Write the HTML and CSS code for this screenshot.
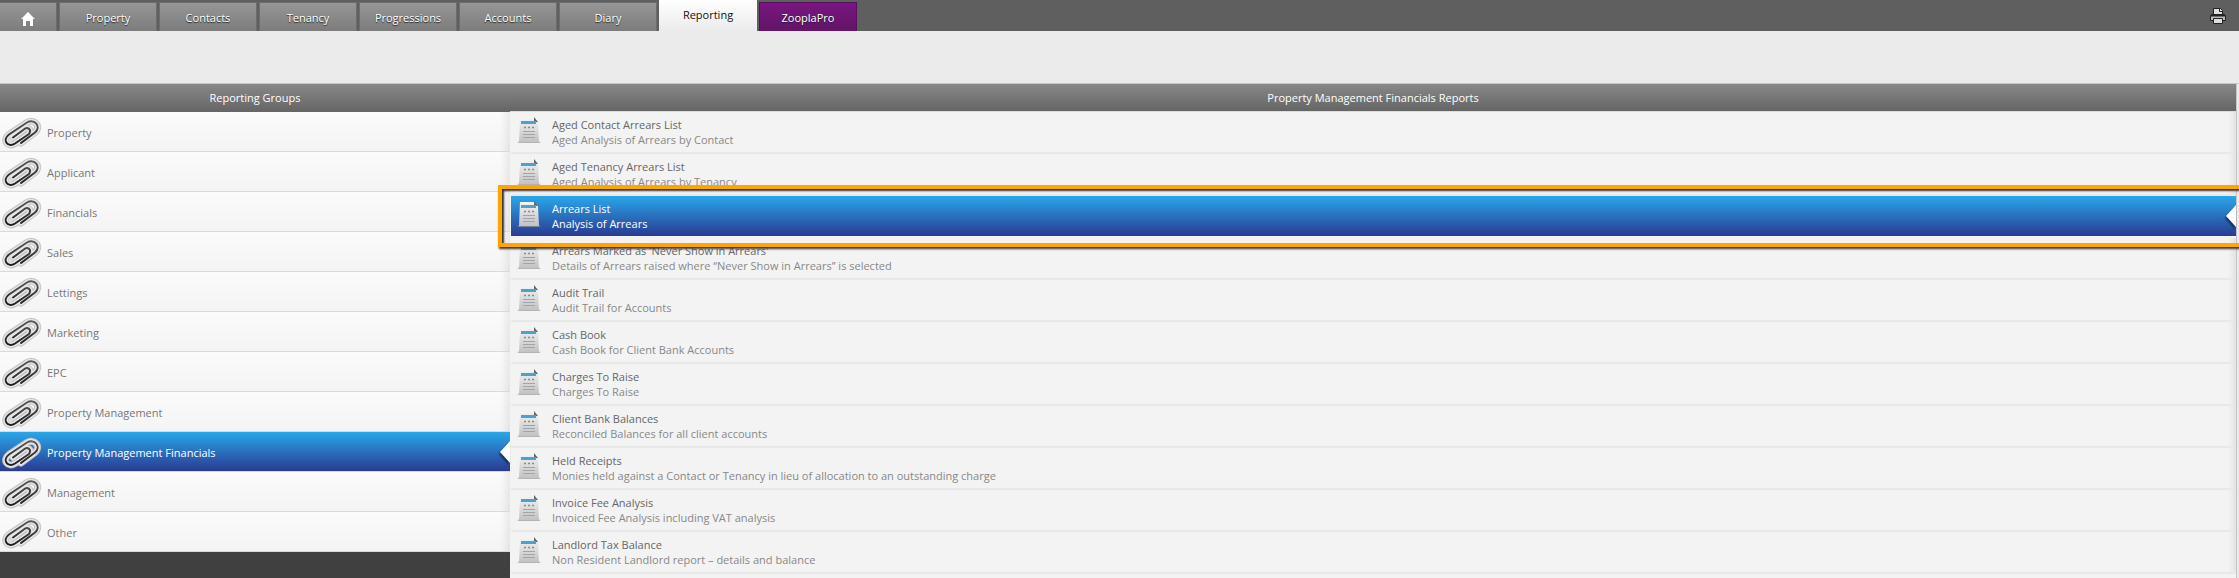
FILE: index.html
```html
<!DOCTYPE html>
<html lang="en">
<head>
<meta charset="utf-8">
<title>Reporting</title>
<link rel="stylesheet" href="styles.css">
</head>
<body>
<svg class="sprite" aria-hidden="true">
  <defs>
    <linearGradient id="paper" x1="0" y1="0" x2="0" y2="1">
      <stop offset="0" stop-color="#f4f4f4"/>
      <stop offset="1" stop-color="#c2c2c2"/>
    </linearGradient>
    <linearGradient id="wire" x1="0" y1="0" x2="0" y2="1">
      <stop offset="0" stop-color="#5a5a5a"/>
      <stop offset="1" stop-color="#1c1c1c"/>
    </linearGradient>
  </defs>
  <symbol id="clip" viewBox="0 0 40 32">
    <g fill="none" stroke-linecap="round" stroke-linejoin="round">
      <path class="halo-edge" d="M19 26 L33 15.500 C40 9 32 1.500 25 5.500 L7 17.500 C-.5 23.500 6 31 13 26.500 L27 17 C30 13 26 9.500 22.500 12 L11 20.500"/>
      <path class="halo" d="M19 26 L33 15.500 C40 9 32 1.500 25 5.500 L7 17.500 C-.5 23.500 6 31 13 26.500 L27 17 C30 13 26 9.500 22.500 12 L11 20.500"/>
      <path class="wire" d="M19 26 L33 15.500 C40 9 32 1.500 25 5.500 L7 17.500 C-.5 23.500 6 31 13 26.500 L27 17 C30 13 26 9.500 22.500 12 L11 20.500"/>
    </g>
  </symbol>
  <symbol id="report" viewBox="0 0 24 26">
    <path d="M0 25 Q12 22 24 25 L22 26 H2Z" fill="#999" opacity=".7"/>
    <path d="M3 1 H17 L21 5 L22 25 H2Z" fill="url(#paper)"/>
    <path d="M17 0 L21 5 H17Z" fill="#666"/>
    <rect x="4" y="4" width="15" height="3" fill="#4da2cc"/>
    <path d="M7 10.500h2M11 10.500h2M15 10.500h2" stroke="#888" stroke-width="1.500"/>
    <path d="M6 14.500h12M6 17.500h12M6 20.500h12" stroke="#9aa5ad"/>
  </symbol>
</svg>

<header class="topbar">
  <nav class="tabs" aria-label="Main">
    <a class="tab home" href="#" aria-label="Home">
      <svg width="14" height="14" viewBox="0 0 14 14"><path d="M7 0 L14 7 H12 V14 H9 V9 H5 V14 H2 V7 H0Z" fill="#fff"/></svg>
    </a>
    <a class="tab" href="#">Property</a>
    <a class="tab" href="#">Contacts</a>
    <a class="tab" href="#">Tenancy</a>
    <a class="tab" href="#">Progressions</a>
    <a class="tab" href="#">Accounts</a>
    <a class="tab" href="#">Diary</a>
    <a class="tab active" href="#" aria-current="page">Reporting</a>
    <a class="tab zoopla" href="#">ZooplaPro</a>
  </nav>
  <button class="print" type="button" aria-label="Print">
    <svg width="16" height="16" viewBox="0 0 16 16" stroke="#222"><path d="M3.500 6.500V.5H10.500L12.500 2.500V6.500" fill="#e0e0e0"/><path d="M9.500 1V3.500H12" fill="none"/><path d="M1.500 6.500H14.500L15.500 8V12.500H.5V8Z" fill="#bbb"/><path d="M1 7.500H15" stroke-width="2"/><path d="M3.500 10.500H12.500V15.500H3.500Z" fill="#ddd"/></svg>
  </button>
</header>

<main class="workspace">
  <section class="groups">
    <h2 class="heading">Reporting Groups</h2>
    <ul class="list">
      <li><a class="group" href="#"><svg class="clip"><use href="#clip"/></svg>Property</a></li>
      <li><a class="group" href="#"><svg class="clip"><use href="#clip"/></svg>Applicant</a></li>
      <li><a class="group" href="#"><svg class="clip"><use href="#clip"/></svg>Financials</a></li>
      <li><a class="group" href="#"><svg class="clip"><use href="#clip"/></svg>Sales</a></li>
      <li><a class="group" href="#"><svg class="clip"><use href="#clip"/></svg>Lettings</a></li>
      <li><a class="group" href="#"><svg class="clip"><use href="#clip"/></svg>Marketing</a></li>
      <li><a class="group" href="#"><svg class="clip"><use href="#clip"/></svg>EPC</a></li>
      <li><a class="group" href="#"><svg class="clip"><use href="#clip"/></svg>Property Management</a></li>
      <li><a class="group selected" href="#" aria-current="true"><svg class="clip"><use href="#clip"/></svg>Property Management Financials<svg class="notch" viewBox="0 0 10 22"><path d="M10 0 L0 11 L10 22Z"/></svg></a></li>
      <li><a class="group" href="#"><svg class="clip"><use href="#clip"/></svg>Management</a></li>
      <li><a class="group" href="#"><svg class="clip"><use href="#clip"/></svg>Other</a></li>
    </ul>
  </section>
  <section class="reports">
    <h2 class="heading">Property Management Financials Reports</h2>
    <ul class="list">
      <li><a class="report" href="#"><svg class="doc"><use href="#report"/></svg><span class="text"><span class="name">Aged Contact Arrears List</span><span class="about">Aged Analysis of Arrears by Contact</span></span></a></li>
      <li><a class="report" href="#"><svg class="doc"><use href="#report"/></svg><span class="text"><span class="name">Aged Tenancy Arrears List</span><span class="about">Aged Analysis of Arrears by Tenancy</span></span></a></li>
      <li class="marked"><a class="report selected" href="#" aria-current="true"><svg class="doc"><use href="#report"/></svg><span class="text"><span class="name">Arrears List</span><span class="about">Analysis of Arrears</span></span><svg class="notch" viewBox="0 0 10 22"><path d="M10 0 L0 11 L10 22Z"/></svg></a></li>
      <li><a class="report" href="#"><svg class="doc"><use href="#report"/></svg><span class="text"><span class="name">Arrears Marked as 'Never Show in Arrears'</span><span class="about">Details of Arrears raised where “Never Show in Arrears” is selected</span></span></a></li>
      <li><a class="report" href="#"><svg class="doc"><use href="#report"/></svg><span class="text"><span class="name">Audit Trail</span><span class="about">Audit Trail for Accounts</span></span></a></li>
      <li><a class="report" href="#"><svg class="doc"><use href="#report"/></svg><span class="text"><span class="name">Cash Book</span><span class="about">Cash Book for Client Bank Accounts</span></span></a></li>
      <li><a class="report" href="#"><svg class="doc"><use href="#report"/></svg><span class="text"><span class="name">Charges To Raise</span><span class="about">Charges To Raise</span></span></a></li>
      <li><a class="report" href="#"><svg class="doc"><use href="#report"/></svg><span class="text"><span class="name">Client Bank Balances</span><span class="about">Reconciled Balances for all client accounts</span></span></a></li>
      <li><a class="report" href="#"><svg class="doc"><use href="#report"/></svg><span class="text"><span class="name">Held Receipts</span><span class="about">Monies held against a Contact or Tenancy in lieu of allocation to an outstanding charge</span></span></a></li>
      <li><a class="report" href="#"><svg class="doc"><use href="#report"/></svg><span class="text"><span class="name">Invoice Fee Analysis</span><span class="about">Invoiced Fee Analysis including VAT analysis</span></span></a></li>
      <li><a class="report" href="#"><svg class="doc"><use href="#report"/></svg><span class="text"><span class="name">Landlord Tax Balance</span><span class="about">Non Resident Landlord report – details and balance</span></span></a></li>
    </ul>
  </section>
</main>
</body>
</html>
```

FILE: styles.css
```css
* { box-sizing: border-box; }
html, body { height: 100%; }
body {
  margin: 0;
  display: flex;
  flex-direction: column;
  overflow: hidden;
  background: #ebebeb;
  color: #666;
  font: 11px/15px "Open Sans", "Noto Sans", sans-serif;
}
a { color: inherit; text-decoration: none; }
.sprite { position: absolute; width: 0; height: 0; }

.topbar {
  flex: none;
  display: flex;
  justify-content: space-between;
  height: 31px;
  background: #5f5f5f;
}
.tabs { display: flex; align-items: flex-end; gap: 2px; }
.tab {
  display: flex;
  align-items: center;
  justify-content: center;
  width: 98px;
  height: 29px;
  border: 1px solid #6d6d6d;
  border-bottom: 0;
  background: linear-gradient(#969696, #7c7c7c);
  color: #fff;
  text-shadow: 0 1px 1px #222;
}
.home { width: 57px; border-left: 0; padding-top: 4px; }
.active {
  height: 31px;
  padding-bottom: 2px;
  border: 0;
  background: linear-gradient(#fff, #ebebeb);
  color: #111;
  text-shadow: none;
}
.zoopla { border-color: #56105d; background: linear-gradient(#791680, #621568); }
.print {
  display: flex;
  align-items: center;
  padding: 0 13px 0 0;
  border: 0;
  background: none;
}

.workspace {
  flex: 1;
  min-height: 0;
  display: grid;
  grid-template-columns: 510px 1fr;
  margin-top: 52px;
  border-top: 1px solid #c6c6c6;
}
.heading {
  margin: 0;
  background: linear-gradient(#888, #656565);
  color: #fff;
  font-size: 11px;
  font-weight: 400;
  line-height: 27px;
  text-align: center;
}
.list { margin: 0; padding: 0; list-style: none; }
.groups { background: #404040; }
.groups .heading { line-height: 28px; }
.group {
  position: relative;
  display: flex;
  align-items: center;
  gap: 5px;
  height: 40px;
  padding: 2px 0 0 2px;
  border-bottom: 1px solid #dadada;
  background: linear-gradient(90deg, transparent 500px, #0001), linear-gradient(#fbfbfb, #f4f4f4);
  color: #777;
}
.clip { width: 40px; height: 32px; }
.halo-edge { stroke: #c4c4c4; stroke-width: 7; }
.halo { stroke: #e6e6e6; stroke-width: 5; }
.wire { stroke: url(#wire); stroke-width: 2; }
.doc { flex: none; width: 24px; height: 26px; }

.reports {
  margin-right: 2px;
  border-right: 1px solid #c4c4c4;
  background: #f3f3f3;
}
.reports .list { padding-left: 1px; border-top: 1px solid #ddd; }
.reports li { padding-bottom: 2px; background: #e8e8e8; }
.report {
  position: relative;
  display: flex;
  gap: 11px;
  height: 40px;
  padding: 5px 6px;
  background: linear-gradient(270deg, #0001, transparent 8px), #f3f3f3;
}
.text { display: flex; flex-direction: column; }
.about { color: #888; }
.selected, .selected .about { color: #fff; }
.selected { background: linear-gradient(#29a7e9, #2a3a92); }
.notch {
  position: absolute;
  top: 9px;
  right: 0;
  width: 10px;
  height: 22px;
  fill: #fff;
  filter: drop-shadow(-1px 2px 1px #0008);
}
.reports .marked { position: relative; z-index: 1; background: #f3f3f3; }
.marked::after {
  content: "";
  position: absolute;
  inset: -11px -8px -9px -13px;
  border: 4px solid #ffa500;
  border-right: 0;
  box-shadow: 1px 2px 2px #333, inset 2px 2px 2px #333;
  pointer-events: none;
}
```
